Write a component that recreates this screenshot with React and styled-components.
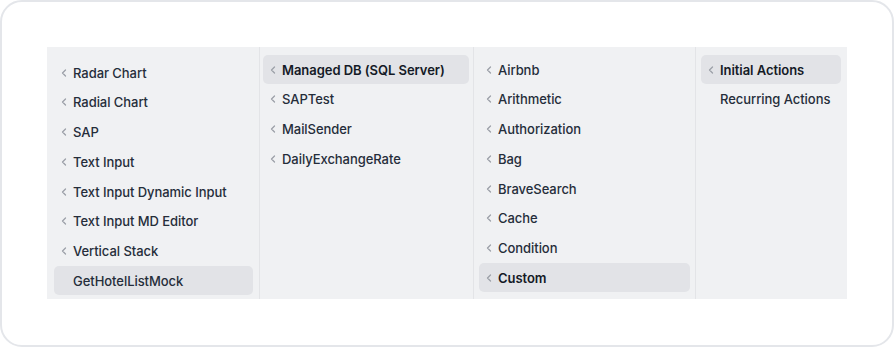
import React from 'react';
import styled, {createGlobalStyle} from 'styled-components';

const GlobalStyle = createGlobalStyle`
  html, body {
    margin: 0;
    padding: 0;
    background: #ffffff;
  }
  body {
    font-family: Inter, "Noto Sans", sans-serif;
    -webkit-font-smoothing: antialiased;
  }
`;

const Card = styled.div`
  box-sizing: border-box;
  width: 894px;
  height: 347px;
  border: 2px solid #e4e6ea;
  border-radius: 22px;
  background: #ffffff;
  padding: 45px;
`;

const Panel = styled.div`
  display: flex;
  width: 800px;
  height: 252px;
  background: #f0f1f3;
  overflow: hidden;
`;

const Column = styled.div`
  box-sizing: border-box;
  width: ${props => props.$width}px;
  flex: none;
  display: flex;
  flex-direction: column;
  padding: ${props => props.$top}px ${props => props.$right}px 0 ${props => props.$left}px;
  border-right: ${props => props.$last ? 'none' : '1px solid #e3e4e7'};
`;

const Item = styled.div`
  box-sizing: border-box;
  height: 29px;
  margin-bottom: 0.75px;
  flex: none;
  display: flex;
  align-items: center;
  padding: 0 8px 0 5px;
  border-radius: 5px;
  background: ${props => props.$active ? '#e2e3e7' : 'transparent'};
  font-size: 13px;
  letter-spacing: -0.05px;
  font-weight: ${props => props.$bold ? 600 : 500};
  color: ${props => props.$bold ? '#141a26' : '#252d3a'};
  white-space: nowrap;
`;

const Chevron = styled.span`
  width: 13px;
  flex: none;
  display: flex;
  align-items: center;
  justify-content: flex-start;
  padding-left: 1px;
  color: #9ca0a8;
`;

const ChevronIcon = () => (
  <svg width="8" height="10" viewBox="0 0 8 10" fill="none">
    <path d="M5.5 2 L2.5 5 L5.5 8" stroke="currentColor" strokeWidth="1.3" strokeLinecap="round" strokeLinejoin="round"/>
  </svg>
);

const columns = [
  {
    width: 213, top: 11, left: 7, right: 6,
    items: [
      {label: 'Radar Chart'},
      {label: 'Radial Chart'},
      {label: 'SAP'},
      {label: 'Text Input'},
      {label: 'Text Input Dynamic Input'},
      {label: 'Text Input MD Editor'},
      {label: 'Vertical Stack'},
      {label: 'GetHotelListMock', active: true, leaf: true}
    ]
  },
  {
    width: 214, top: 8, left: 3, right: 4,
    items: [
      {label: 'Managed DB (SQL Server)', active: true, bold: true},
      {label: 'SAPTest'},
      {label: 'MailSender'},
      {label: 'DailyExchangeRate'}
    ]
  },
  {
    width: 222, top: 8, left: 5, right: 5,
    items: [
      {label: 'Airbnb'},
      {label: 'Arithmetic'},
      {label: 'Authorization'},
      {label: 'Bag'},
      {label: 'BraveSearch'},
      {label: 'Cache'},
      {label: 'Condition'},
      {label: 'Custom', active: true, bold: true}
    ]
  },
  {
    width: 151, top: 8, left: 5, right: 6, last: true,
    items: [
      {label: 'Initial Actions', active: true, bold: true},
      {label: 'Recurring Actions', leaf: true}
    ]
  }
];

const App = () => (
  <>
    <GlobalStyle/>
    <Card>
      <Panel>
        {columns.map((col, i) => (
          <Column
            key={i}
            $width={col.width}
            $top={col.top}
            $left={col.left}
            $right={col.right}
            $last={col.last}
          >
            {col.items.map(item => (
              <Item key={item.label} $active={item.active} $bold={item.bold}>
                <Chevron>{!item.leaf && <ChevronIcon/>}</Chevron>
                {item.label}
              </Item>
            ))}
          </Column>
        ))}
      </Panel>
    </Card>
  </>
);

export default App;
